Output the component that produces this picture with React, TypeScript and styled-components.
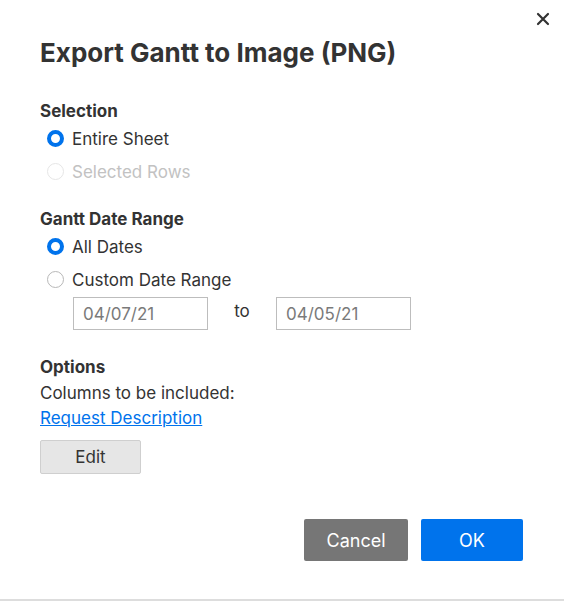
import styled, { createGlobalStyle } from 'styled-components'

const Global = createGlobalStyle`
  html, body { margin: 0; padding: 0; background: #fff; }
  body { font-family: Inter, "Liberation Sans", sans-serif; color: #333; }
`

const Dialog = styled.div`
  position: relative;
  width: 564px;
  height: 601px;
  box-sizing: border-box;
  padding: 34px 40px 0 40px;
  border-bottom: 2px solid #ddd;
  overflow: hidden;
`

const Close = styled.button`
  position: absolute;
  top: 11px;
  right: 13px;
  border: none;
  background: none;
  padding: 0;
  width: 16px;
  height: 16px;
  cursor: pointer;
`

const Title = styled.h1`
  margin: 0 0 28px;
  font-size: 26px;
  font-weight: 700;
  line-height: 38px;
  color: #333;
`

const Section = styled.div`
  margin-bottom: 20px;
`

const Heading = styled.div`
  font-size: 17px;
  font-weight: 700;
  line-height: 22px;
  color: #333;
`

const RadioRow = styled.label<{ disabled?: boolean }>`
  display: flex;
  align-items: center;
  gap: 8px;
  height: 33px;
  padding-left: 7px;
  font-size: 17px;
  color: ${({ disabled }) => (disabled ? '#c2c2c2' : '#333')};
`

const Dot = styled.span<{ checked?: boolean; disabled?: boolean }>`
  box-sizing: border-box;
  width: 17px;
  height: 17px;
  border-radius: 50%;
  background: #fff;
  border: ${({ checked, disabled }) =>
    checked ? '4.5px solid #0073ec' : `1px solid ${disabled ? '#e6e6e6' : '#b8b8b8'}`};
`

const DateRow = styled.div`
  display: flex;
  align-items: center;
  padding-left: 33px;
  margin-top: 1px;
`

const DateInput = styled.div`
  box-sizing: border-box;
  width: 135px;
  height: 33px;
  border: 1px solid #bdbdbd;
  padding: 0 9px;
  display: flex;
  align-items: center;
  font-size: 17px;
  color: #7a7a7a;
`

const To = styled.span`
  width: 68px;
  text-align: center;
  font-size: 17px;
  color: #333;
  margin-top: -6px;
`

const Text = styled.div`
  font-size: 17px;
  line-height: 25px;
  color: #333;
`

const Link = styled.a`
  display: block;
  font-size: 17px;
  line-height: 25px;
  color: #0073ec;
  text-decoration: underline;
`

const EditButton = styled.button`
  margin-top: 9px;
  width: 101px;
  height: 34px;
  background: #e6e6e6;
  border: 1px solid #cfcfcf;
  border-radius: 2px;
  font-family: inherit;
  font-size: 17px;
  color: #333;
`

const Footer = styled.div`
  display: flex;
  justify-content: flex-end;
  gap: 13px;
  margin-top: 45px;
  margin-right: 1px;
`

const Action = styled.button<{ primary?: boolean }>`
  width: ${({ primary }) => (primary ? '102px' : '104px')};
  height: 42px;
  border: none;
  border-radius: 2px;
  background: ${({ primary }) => (primary ? '#0073ec' : '#767676')};
  color: #fff;
  font-family: inherit;
  font-size: 18px;
`

export default function App() {
  return (
    <Dialog>
      <Global />
      <Close aria-label="Close">
        <svg width="16" height="16" viewBox="0 0 16 16">
          <path d="M3 3L13 13M13 3L3 13" stroke="#333" strokeWidth="2.2" strokeLinecap="round" />
        </svg>
      </Close>
      <Title>Export Gantt to Image (PNG)</Title>
      <Section>
        <Heading>Selection</Heading>
        <RadioRow><Dot checked />Entire Sheet</RadioRow>
        <RadioRow disabled><Dot disabled />Selected Rows</RadioRow>
      </Section>
      <Section style={{ marginBottom: 26 }}>
        <Heading>Gantt Date Range</Heading>
        <RadioRow><Dot checked />All Dates</RadioRow>
        <RadioRow><Dot />Custom Date Range</RadioRow>
        <DateRow>
          <DateInput>04/07/21</DateInput>
          <To>to</To>
          <DateInput>04/05/21</DateInput>
        </DateRow>
      </Section>
      <Heading>Options</Heading>
      <Text style={{ marginTop: 3 }}>Columns to be included:</Text>
      <Link href="#">Request Description</Link>
      <EditButton>Edit</EditButton>
      <Footer>
        <Action>Cancel</Action>
        <Action primary>OK</Action>
      </Footer>
    </Dialog>
  )
}
